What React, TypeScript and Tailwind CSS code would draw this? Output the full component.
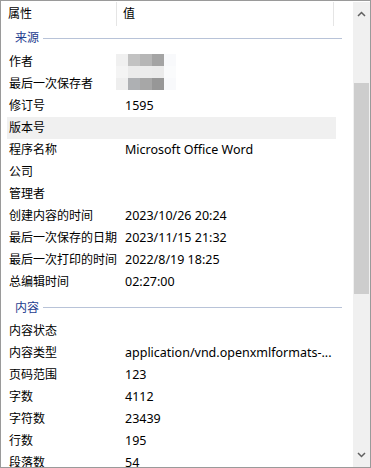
import React from "react";

type Row = { label: string; value?: string; blur?: boolean; selected?: boolean };

const source: Row[] = [
  { label: "作者", blur: true },
  { label: "最后一次保存者" },
  { label: "修订号", value: "1595" },
  { label: "版本号", selected: true },
  { label: "程序名称", value: "Microsoft Office Word" },
  { label: "公司" },
  { label: "管理者" },
  { label: "创建内容的时间", value: "2023/10/26 20:24" },
  { label: "最后一次保存的日期", value: "2023/11/15 21:32" },
  { label: "最后一次打印的时间", value: "2022/8/19 18:25" },
  { label: "总编辑时间", value: "02:27:00" },
];

const content: Row[] = [
  { label: "内容状态" },
  { label: "内容类型", value: "application/vnd.openxmlformats-..." },
  { label: "页码范围", value: "123" },
  { label: "字数", value: "4112" },
  { label: "字符数", value: "23439" },
  { label: "行数", value: "195" },
  { label: "段落数", value: "54" },
];

// pixelated redaction over author / last saved by
const mosaic = [
  ["#f0f0f0", "#c2c2c2", "#b6b6b6", "#a4a4a4", "#f8f9fb"],
  ["#f4f4f4", "#ebebeb", "#ececec", "#ebebeb", "#fafbfc"],
  ["#eeeeee", "#aeb0b3", "#a7a7a7", "#979797", "#f8f9fb"],
];

function Mosaic() {
  return (
    <div className="flex flex-col">
      {mosaic.map((r, i) => (
        <div key={i} className="flex">
          {r.map((c, j) => (
            <div key={j} className="w-[12px] h-[12px]" style={{ backgroundColor: c }} />
          ))}
        </div>
      ))}
    </div>
  );
}

function PropRow({ row }: { row: Row }) {
  return (
    <div
      className={`flex h-[22px] items-center ml-[6px] w-[329px] ${row.selected ? "bg-[#f0f0f0]" : ""}`}
    >
      <div className="w-[111px] pl-[2px] shrink-0 whitespace-nowrap">{row.label}</div>
      <div className="pl-[7px] whitespace-nowrap relative text-[12.5px]">
        {row.value}
        {row.blur && (
          <div className="absolute left-[-2px] top-[-8px]">
            <Mosaic />
          </div>
        )}
      </div>
    </div>
  );
}

export default function App() {
  return (
    <div
      className="w-[371px] h-[468px] border border-[#9a9a9a] bg-white flex overflow-hidden text-[12px] text-black"
      style={{ fontFamily: '"Noto Sans", "Noto Sans CJK SC", sans-serif' }}
    >
      <div className="flex-1 overflow-hidden">
        {/* header */}
        <div className="flex h-[25px] items-stretch">
          <div className="w-[116px] pl-[7px] flex items-center border-r border-[#e5e5e5] mt-[1px]">
            属性
          </div>
          <div className="w-[217px] pl-[6px] flex items-center border-r border-[#e5e5e5] mt-[1px]">
            值
          </div>
        </div>

        <div className="flex items-center h-[25px] pl-[14px] pr-[11px] pb-[1px]">
          <span className="text-[#1e3d8f]">来源</span>
          <div className="flex-1 h-px bg-[#b8c3d8] ml-[4px]" />
        </div>
        {source.map((r) => (
          <PropRow key={r.label} row={r} />
        ))}

        <div className="flex items-center h-[27px] pl-[14px] pr-[11px] pt-[2px]">
          <span className="text-[#1e3d8f]">内容</span>
          <div className="flex-1 h-px bg-[#b8c3d8] ml-[4px]" />
        </div>
        {content.map((r) => (
          <PropRow key={r.label} row={r} />
        ))}
      </div>

      {/* scrollbar */}
      <div className="w-[17px] bg-[#f0f0f0] flex flex-col items-center mt-[1px]">
        <div className="h-[21px] flex items-center justify-center pt-[2px]">
          <svg width="9" height="6" viewBox="0 0 9 6">
            <path d="M1 5 L4.5 1.5 L8 5" fill="none" stroke="#606060" strokeWidth="1.5" />
          </svg>
        </div>
        <div className="w-[15px] h-[211px] bg-[#cdcdcd] mt-[60px]" />
        <div className="flex-1" />
        <div className="h-[20px] flex items-center justify-center pb-[4px]">
          <svg width="9" height="6" viewBox="0 0 9 6">
            <path d="M1 1 L4.5 4.5 L8 1" fill="none" stroke="#606060" strokeWidth="1.5" />
          </svg>
        </div>
      </div>
    </div>
  );
}
